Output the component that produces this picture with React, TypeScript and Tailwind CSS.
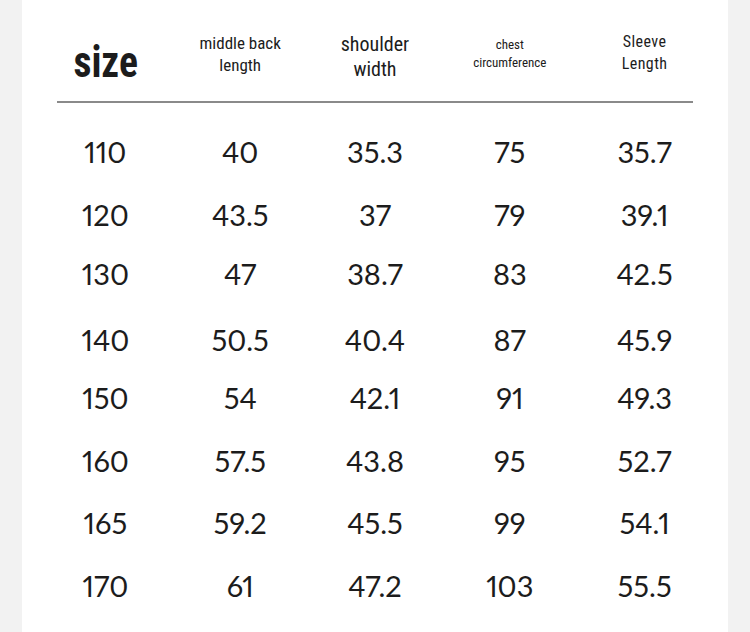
const rows = [
  { gap: "mt-0", v: ["110", "40", "35.3", "75", "35.7"] },
  { gap: "mt-[27px]", v: ["120", "43.5", "37", "79", "39.1"] },
  { gap: "mt-[23px]", v: ["130", "47", "38.7", "83", "42.5"] },
  { gap: "mt-[30px]", v: ["140", "50.5", "40.4", "87", "45.9"] },
  { gap: "mt-[22px]", v: ["150", "54", "42.1", "91", "49.3"] },
  { gap: "mt-[27px]", v: ["160", "57.5", "43.8", "95", "52.7"] },
  { gap: "mt-[26px]", v: ["165", "59.2", "45.5", "99", "54.1"] },
  { gap: "mt-[27px]", v: ["170", "61", "47.2", "103", "55.5"] },
];

const cond = "[font-family:'Roboto_Condensed','DejaVu_Sans_Condensed','Liberation_Sans_Narrow',Roboto,sans-serif]";

export default function App() {
  return (
    <div className="flex h-[632px] w-[750px] overflow-hidden bg-[#f2f2f2]">
      <div className="ml-[22px] w-[706px] bg-white text-[#1c1c1c]">
        <div className={`mx-[16px] grid h-[101px] grid-cols-5 items-center pt-[6px] text-center ${cond}`}>
          <div className="pt-[16px] text-[45px] font-bold leading-none">
            <span className="inline-block scale-x-[0.88]">size</span>
          </div>
          <div className="text-[17px] leading-[22px]">middle back<br />length</div>
          <div className="pt-[6px] text-[20px] leading-[25px]">shoulder<br />width</div>
          <div className="text-[13px] leading-[18px]">chest<br />circumference</div>
          <div className="pb-[2px] text-[16px] leading-[22px] tracking-wide">Sleeve<br />Length</div>
        </div>
        <div className="mx-[35px] h-[1.5px] bg-[#8a8a8a]" />
        <div className="mx-[16px] pt-[31px] [font-family:Lato,'Noto_Sans',sans-serif] proportional-nums">
          {rows.map((r) => (
            <div key={r.v[0]} className={`grid grid-cols-5 text-center text-[29px] leading-[36px] ${r.gap}`}>
              {r.v.map((c, i) => (
                <div key={i}>{c}</div>
              ))}
            </div>
          ))}
        </div>
      </div>
    </div>
  );
}
